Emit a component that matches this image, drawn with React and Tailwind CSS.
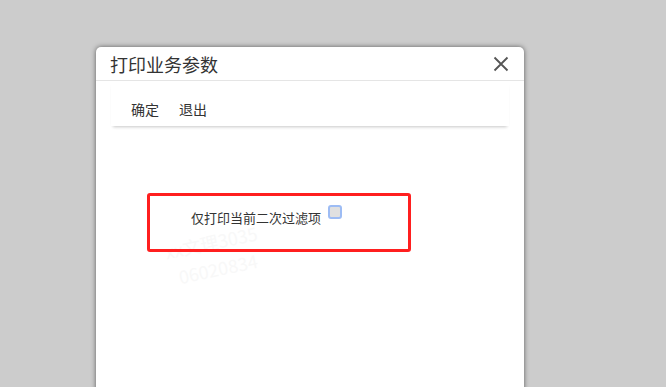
import React from "react";

export default function App() {
  const font = { fontFamily: '"Microsoft YaHei", "Noto Sans CJK SC", "Noto Sans", sans-serif' };
  return (
    <div className="w-[666px] h-[387px] bg-[#cccccc] overflow-hidden pt-[47px] pl-[96px]" style={font}>
      <div className="relative w-[428px] h-[345px] bg-white rounded-t-[5px] shadow-[0_0_5px_rgba(0,0,0,0.55)] flex flex-col">
        <div className="absolute left-[68px] top-[184px] -rotate-[12deg] text-[18px] text-[#f8f8f8] leading-[22px] pointer-events-none">
          xx文理3035
        </div>
        <div className="absolute left-[82px] top-[210px] -rotate-[12deg] text-[18px] text-[#f8f8f8] leading-[22px] pointer-events-none">
          06020834
        </div>
        <div className="relative h-[34px] border-b border-[#e5e5e5] flex items-center justify-between pl-[14px] pr-[15px]">
          <span className="text-[18px] text-[#333] leading-none">打印业务参数</span>
          <svg width="16" height="16" viewBox="0 0 16 16" className="text-[#555]">
            <path d="M1.5 1.5 L14.5 14.5 M14.5 1.5 L1.5 14.5" stroke="currentColor" strokeWidth="1.8" fill="none" />
          </svg>
        </div>
        <div className="relative mx-[15px] h-[45px] flex items-end pb-[6px] pl-[20px] gap-[20px] shadow-[0_3px_3px_-2px_rgba(0,0,0,0.22)] text-[14px] text-[#333]">
          <span>确定</span>
          <span>退出</span>
        </div>
        <div className="relative ml-[51px] mt-[67px] w-[264px] h-[59px] border-[3px] border-[#ff1f1f] rounded-[3px] pl-[41px] pt-[8px] flex items-start">
          <span className="text-[13px] text-[#333] mt-[4px]">仅打印当前二次过滤项</span>
          <span className="ml-[7px] mt-[1px] w-[14px] h-[14px] rounded-[3px] border-2 border-[#9dbcf4] bg-[#e0e0e0]" />
        </div>
      </div>
    </div>
  );
}
